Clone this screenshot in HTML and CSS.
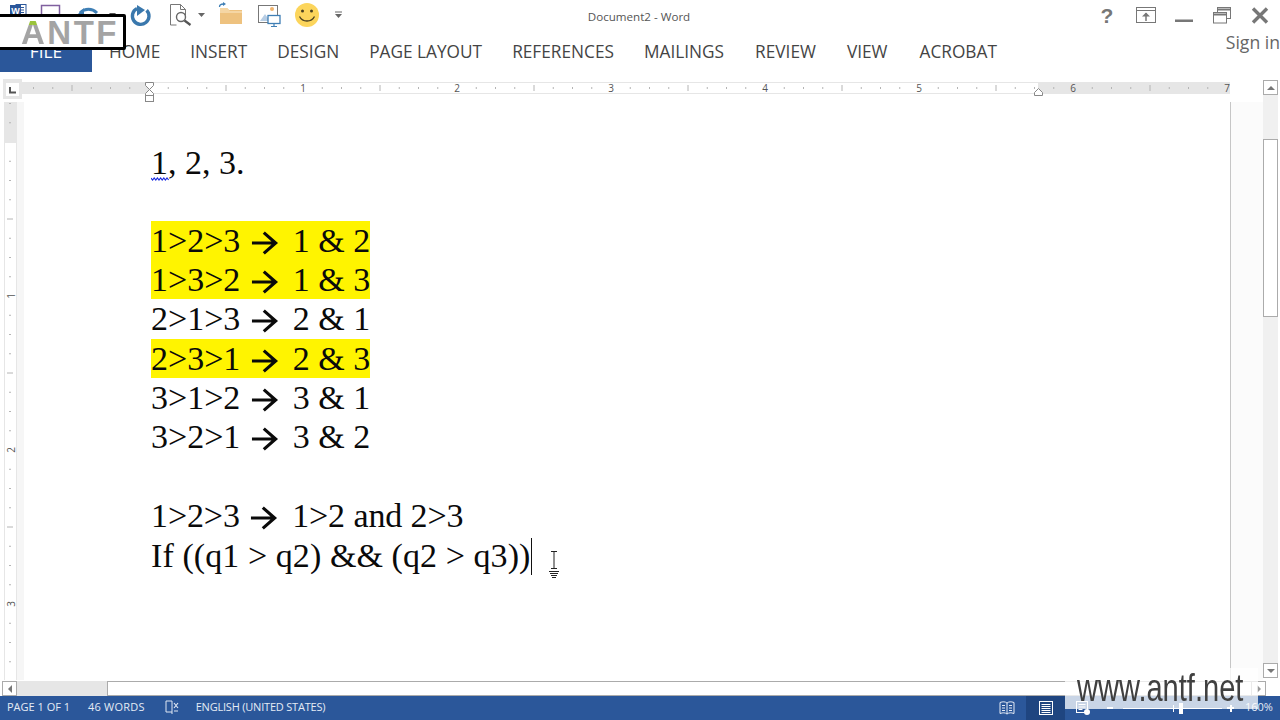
FILE: index.html
```html
<!DOCTYPE html>
<html lang="en">
<head>
    <meta charset="UTF-8">
    <title>Document2 - Word</title>
    <link rel="stylesheet" href="styles.css">
</head>
<body>
    <div id="app">
        <div id="titlebar">
            <div class="qat">
                <svg viewBox="0 0 36 33" width="36" height="33">
                    <rect x="16" y="4.500" width="10" height="13" fill="#fff" stroke="#2b579a"/>
                    <path d="M20 7.500h4M20 10h4M20 12.500h4" stroke="#2b579a"/>
                    <rect x="10" y="5" width="11" height="11" fill="#2b579a"/>
                    <text x="15.500" y="14" class="word-w">W</text>
                </svg>
                <svg viewBox="36 0 34 33" width="34" height="33">
                    <rect x="41.500" y="5.500" width="18" height="14" fill="#fff" stroke="#80609f" stroke-width="1.500"/>
                </svg>
                <svg viewBox="70 0 34 33" width="34" height="33">
                    <path d="M80 13c5-5 12-5 17 0" fill="none" stroke="#3f7fb5" stroke-width="3"/>
                    <path d="M78 14l6-6v8z" fill="#3f7fb5"/>
                </svg>
                <svg viewBox="104 0 22 33" width="22" height="33">
                    <path d="M109 13h7l-3.500 4z" fill="#555"/>
                </svg>
                <svg viewBox="126 0 34 33" width="34" height="33">
                    <path d="M146.600 10.200A8.300 8.300 0 1 1 137 8.600" fill="none" stroke="#3a78ad" stroke-width="3.400"/>
                    <path d="M137 5l8 5-8 6z" fill="#3a78ad"/>
                </svg>
                <svg viewBox="160 0 34 33" width="34" height="33">
                    <path d="M170.500 4.500h10l5 5v6M170.500 4.500v20.500h6" fill="none" stroke="#777"/>
                    <path d="M180.500 4.500v5h5" fill="none" stroke="#777"/>
                    <circle cx="181" cy="17" r="4.500" fill="#fff" stroke="#666" stroke-width="1.400"/>
                    <path d="M184.500 20.500l6 4.500" stroke="#555" stroke-width="2.200"/>
                </svg>
                <svg viewBox="194 0 18 33" width="18" height="33">
                    <path d="M198 13h7l-3.500 4z" fill="#666"/>
                </svg>
                <svg viewBox="212 0 38 33" width="38" height="33">
                    <path d="M220 8h7l2 2h13v14h-22z" fill="#eec27f"/>
                    <path d="M220 8h7l3 3h12v2h-22z" fill="#f5d6a4"/>
                    <path d="M219.500 7c0-2 1.500-3 4-3" fill="none" stroke="#3f7fb5" stroke-width="1.300"/>
                    <path d="M223 2l3 2-3 2z" fill="#3f7fb5"/>
                </svg>
                <svg viewBox="250 0 38 33" width="38" height="33">
                    <rect x="258.500" y="5.500" width="19" height="17" fill="#fff" stroke="#777"/>
                    <circle cx="272" cy="9" r="2" fill="#f0b46e"/>
                    <path d="M260 21l5-7 5 7z" fill="#b7cde4"/>
                    <rect x="268" y="15.500" width="12" height="8" fill="#fff" stroke="#3f7fb5" stroke-width="1.300"/>
                    <path d="M274 24v2M271 26.500h6" stroke="#3f7fb5" stroke-width="1.200"/>
                </svg>
                <svg viewBox="288 0 38 33" width="38" height="33">
                    <circle cx="307" cy="15" r="12" fill="#fcd55c"/>
                    <circle cx="302.500" cy="11" r="1.500" fill="#4a4020"/>
                    <circle cx="311.500" cy="11" r="1.500" fill="#4a4020"/>
                    <path d="M299.500 16.500c3 6 12 6 15 0" fill="none" stroke="#4a4020" stroke-width="1.300"/>
                </svg>
                <svg viewBox="326 0 24 33" width="24" height="33">
                    <path d="M335 12h7" stroke="#666"/>
                    <path d="M335 14h7l-3.500 4z" fill="#666"/>
                </svg>
            </div>
            <div class="doc-title">Document2 - Word</div>
            <div class="win-controls">
                <span class="help">?</span>
                <svg viewBox="1126 0 40 33" width="40" height="33">
                    <rect x="1136.500" y="7.500" width="19" height="15" fill="none" stroke="#777"/>
                    <path d="M1137 10.500h18" stroke="#777"/>
                    <path d="M1146 13v8" stroke="#777" stroke-width="1.500"/>
                    <path d="M1142 16.500l4-4 4 4z" fill="#777"/>
                </svg>
                <svg viewBox="1166 0 36 33" width="36" height="33">
                    <rect x="1175" y="19.500" width="18" height="2.500" fill="#777"/>
                </svg>
                <svg viewBox="1202 0 38 33" width="38" height="33">
                    <rect x="1217.500" y="7.500" width="13" height="11" fill="none" stroke="#777"/>
                    <path d="M1218 9.500h12" stroke="#777" stroke-width="2"/>
                    <rect x="1213.500" y="12.500" width="13" height="10.500" fill="#fff" stroke="#777"/>
                    <path d="M1214 14.500h12" stroke="#777" stroke-width="2"/>
                </svg>
                <svg viewBox="1240 0 40 33" width="40" height="33">
                    <path d="M1253 8.500l14 14M1267 8.500l-14 14" stroke="#777" stroke-width="3.400"/>
                </svg>
            </div>
        </div>

        <div id="tabs">
            <div class="tab tab-file">FILE</div>
            <div class="tab">HOME</div>
            <div class="tab">INSERT</div>
            <div class="tab">DESIGN</div>
            <div class="tab">PAGE LAYOUT</div>
            <div class="tab">REFERENCES</div>
            <div class="tab">MAILINGS</div>
            <div class="tab tab-review">REVIEW</div>
            <div class="tab tab-view">VIEW</div>
            <div class="tab tab-acrobat">ACROBAT</div>
            <div class="sign-in">Sign in</div>
        </div>

        <div id="editor">
            <div id="doc-area">
                <div id="ruler-row">
                    <div class="ruler-corner">
                        <svg viewBox="0 0 13 13" width="13" height="13">
                            <rect width="13" height="13" fill="#fff"/>
                            <path d="M4 4v5.500h6" fill="none" stroke="#555" stroke-width="2"/>
                        </svg>
                    </div>
                    <svg class="h-ruler" viewBox="22 0 1208 30" width="1208" height="30">
                        <defs>
                            <pattern id="h-ticks" patternUnits="userSpaceOnUse" x="149" y="10" width="154" height="12">
                                <path d="M19.250 5v2M38.500 5v2M57.750 5v2M96.250 5v2M115.500 5v2M134.750 5v2" stroke="#b4b4b4"/>
                                <path d="M77 3v6" stroke="#b4b4b4"/>
                            </pattern>
                        </defs>
                        <rect x="22" y="10" width="1208" height="12" fill="#e6e6e6"/>
                        <rect x="149" y="10" width="889" height="12" fill="#fff"/>
                        <path d="M149 10.500h889M149 21.500h889" stroke="#e6e6e6"/>
                        <rect x="22" y="10" width="1208" height="12" fill="url(#h-ticks)"/>
                        <text x="303" y="20" class="ruler-num">1</text>
                        <text x="457" y="20" class="ruler-num">2</text>
                        <text x="611" y="20" class="ruler-num">3</text>
                        <text x="765" y="20" class="ruler-num">4</text>
                        <text x="919" y="20" class="ruler-num">5</text>
                        <text x="1073" y="20" class="ruler-num">6</text>
                        <text x="1227" y="20" class="ruler-num">7</text>
                        <path d="M145.500 10.500h8v3l-4 4 -4-4zM145.500 24.500v-3l4-4 4 4v3z" fill="#fff" stroke="#888"/>
                        <rect x="145.500" y="23.500" width="8" height="6" fill="#fff" stroke="#888"/>
                        <path d="M1034.500 23.500v-3l4-4 4 4v3z" fill="#fff" stroke="#888"/>
                    </svg>
                </div>
                <div id="workspace">
                    <svg class="v-ruler" viewBox="0 102 24 578" width="24" height="578">
                        <defs>
                            <pattern id="v-ticks" patternUnits="userSpaceOnUse" x="4" y="142" width="12" height="154">
                                <path d="M5 19.250h2M5 38.500h2M5 57.750h2M5 96.250h2M5 115.500h2M5 134.750h2" stroke="#b4b4b4"/>
                                <path d="M3 77h6" stroke="#b4b4b4"/>
                            </pattern>
                        </defs>
                        <rect x="17" y="102" width="7" height="578" fill="#f6f6f6"/>
                        <rect x="4" y="102" width="12" height="41" fill="#e6e6e6"/>
                        <path d="M4.500 143v537M16.500 102v578" stroke="#e6e6e6"/>
                        <rect x="4" y="102" width="12" height="578" fill="url(#v-ticks)"/>
                        <text class="ruler-num" transform="translate(15 296) rotate(-90)">1</text>
                        <text class="ruler-num" transform="translate(15 450) rotate(-90)">2</text>
                        <text class="ruler-num" transform="translate(15 604) rotate(-90)">3</text>
                    </svg>
                    <div id="page">
                        <p class="line line-first"><span class="squiggle">1<svg class="squiggle-mark" viewBox="0 0 19 4" width="19" height="4"><path d="M0 1l1.600 2 1.600-2 1.600 2 1.600-2 1.600 2 1.600-2 1.600 2 1.600-2 1.600 2 1.600-2 1.600 2"/></svg></span>, 2, 3.</p>
                        <p class="line">&nbsp;</p>
                        <p class="line"><mark>1&gt;2&gt;3 <svg class="arrow" viewBox="0 0 36 24"><path d="M3 12h24M15 1.500l12 10.500-12 10.500" /></svg> 1 &amp; 2</mark></p>
                        <p class="line"><mark>1&gt;3&gt;2 <svg class="arrow" viewBox="0 0 36 24"><path d="M3 12h24M15 1.500l12 10.500-12 10.500" /></svg> 1 &amp; 3</mark></p>
                        <p class="line">2&gt;1&gt;3 <svg class="arrow" viewBox="0 0 36 24"><path d="M3 12h24M15 1.500l12 10.500-12 10.500" /></svg> 2 &amp; 1</p>
                        <p class="line"><mark>2&gt;3&gt;1 <svg class="arrow" viewBox="0 0 36 24"><path d="M3 12h24M15 1.500l12 10.500-12 10.500" /></svg> 2 &amp; 3</mark></p>
                        <p class="line">3&gt;1&gt;2 <svg class="arrow" viewBox="0 0 36 24"><path d="M3 12h24M15 1.500l12 10.500-12 10.500" /></svg> 3 &amp; 1</p>
                        <p class="line">3&gt;2&gt;1 <svg class="arrow" viewBox="0 0 36 24"><path d="M3 12h24M15 1.500l12 10.500-12 10.500" /></svg> 3 &amp; 2</p>
                        <p class="line">&nbsp;</p>
                        <p class="line line-tight">1&gt;2&gt;3 <svg class="arrow" viewBox="0 0 36 24"><path d="M3 12h24M15 1.500l12 10.500-12 10.500" /></svg> 1&gt;2 and 2&gt;3</p>
                        <p class="line line-code">If ((q1 &gt; q2) &amp;&amp; (q2 &gt; q3))<span class="caret"></span></p>
                    </div>
                    <div class="gutter"></div>
                </div>
            </div>
            <div id="v-scroll">
                <div class="scroll-btn"><span class="tri-up"></span></div>
                <div class="v-track"><div class="v-thumb"></div></div>
                <div class="scroll-btn"><span class="tri-down"></span></div>
            </div>
        </div>

        <div id="h-scroll">
            <div class="scroll-btn"><span class="tri-left"></span></div>
            <div class="h-track"><div class="h-thumb"></div></div>
            <div class="scroll-btn btn-right"><span class="tri-right"></span></div>
        </div>

        <div id="statusbar">
            <span class="st-page">PAGE 1 OF 1</span>
            <span class="st-words">46 WORDS</span>
            <svg class="st-proof" viewBox="0 0 16 16" width="16" height="16">
                <path d="M8 2H2v11h6M8 2v13" fill="none" stroke="#dfe7f3"/>
                <path d="M10 4l4 5M14 4l-4 5M10 12h4" stroke="#dfe7f3" stroke-width="1.200"/>
            </svg>
            <span class="st-lang">ENGLISH (UNITED STATES)</span>
            <div class="st-right">
                <div class="view-btn">
                    <svg viewBox="0 0 16 14" width="16" height="14">
                        <path d="M1 1.500c3-1 5-1 7 .5 2-1.500 4-1.500 7-.5v11c-3-1-5-1-7 .5-2-1.500-4-1.500-7-.5z" fill="none" stroke="#e4ebf5"/>
                        <path d="M8 2v11M3 4.500h3M3 7h3M3 9.500h3M10 4.500h3M10 7h3M10 9.500h3" stroke="#e4ebf5"/>
                    </svg>
                </div>
                <div class="view-btn view-active">
                    <svg viewBox="0 0 16 14" width="16" height="14">
                        <rect x="1.500" y=".5" width="13" height="13" fill="none" stroke="#fff"/>
                        <path d="M3.500 3.500h9M3.500 5.500h9M3.500 7.500h9M3.500 9.500h9M3.500 11.500h9" stroke="#fff"/>
                    </svg>
                </div>
                <div class="view-btn view-web">
                    <svg viewBox="0 0 16 14" width="16" height="14">
                        <rect x="1.500" y=".5" width="11" height="11" fill="none" stroke="#fff"/>
                        <path d="M3.500 3.500h7M3.500 6h7M3.500 8.500h4" stroke="#fff"/>
                        <circle cx="12" cy="11" r="3" fill="#fff"/>
                    </svg>
                </div>
                <div class="zoom-slider">
                    <span class="zoom-minus"></span>
                    <div class="zoom-track"><span class="zoom-mid"></span><span class="zoom-thumb"></span></div>
                    <span class="zoom-plus"></span>
                </div>
                <span class="zoom-pct">160%</span>
            </div>
        </div>

        <div class="logo"><span class="logo-a">A</span>NTF</div>
        <div class="watermark"><span>www.antf.net</span></div>
        <svg class="ibeam" viewBox="0 0 12 28" width="12" height="28">
            <path d="M3 1.500h6M6 1.500v17M3 18.500h6" fill="none" stroke="#222"/>
            <path d="M1 21.500h10M2 23.500h8M3 25.500h6M4 27.500h4" stroke="#222"/>
        </svg>
    </div>
</body>
</html>
```

FILE: styles.css
```css
html, body {
    margin: 0;
    padding: 0;
    background-color: #ffffff;
}
#app {
    position: relative;
    width: 1280px;
    height: 720px;
    overflow: hidden;
    display: flex;
    flex-direction: column;
    font-family: "Open Sans", "Noto Sans", sans-serif;
    color: #444444;
}
svg {
    display: block;
    flex: none;
}

/* title bar */
#titlebar {
    height: 33px;
    position: relative;
    display: flex;
    justify-content: space-between;
}
.qat, .win-controls {
    display: flex;
}
.word-w {
    font-family: "Liberation Sans", sans-serif;
    font-size: 9px;
    font-weight: bold;
    fill: #ffffff;
    text-anchor: middle;
}
.doc-title {
    position: absolute;
    left: 0;
    right: 2px;
    top: 8px;
    text-align: center;
    font-size: 11.6px;
    line-height: 18px;
    color: #555555;
}
.help {
    width: 46px;
    padding-left: 8px;
    box-sizing: border-box;
    text-align: center;
    font-family: "Liberation Sans", sans-serif;
    font-weight: bold;
    font-size: 21px;
    line-height: 31px;
    color: #777777;
}

/* ribbon tabs */
#tabs {
    height: 39px;
    display: flex;
    align-items: stretch;
}
.tab {
    padding: 0 15px;
    font-size: 17.25px;
    line-height: 37px;
    color: #444444;
}
.tab-file {
    width: 92px;
    box-sizing: border-box;
    margin-right: 2px;
    padding: 0;
    text-align: center;
    background-color: #2b579a;
    color: #ffffff;
}
.tab-review, .tab-view {
    margin-left: 1px;
}
.tab-acrobat {
    margin-left: 2px;
}
.sign-in {
    margin-left: auto;
    margin-top: -9px;
    font-size: 17.6px;
    line-height: 37px;
    color: #666666;
}

/* ruler + page */
#editor {
    flex: 1;
    display: flex;
    min-height: 0;
}
#doc-area {
    width: 1263px;
    display: flex;
    flex-direction: column;
}
#ruler-row {
    height: 30px;
    display: flex;
}
.ruler-corner {
    width: 19px;
    height: 20px;
    margin: 7px 0 0 3px;
    background-color: #e6e6e6;
    display: flex;
    align-items: center;
    justify-content: center;
}
.ruler-num {
    font-size: 10px;
    fill: #555555;
    text-anchor: middle;
}
#workspace {
    flex: 1;
    display: flex;
    min-height: 0;
}
#page {
    width: 1207px;
    box-sizing: border-box;
    padding: 40.2px 0 0 127px;
    border-right: 1px solid #c6c6c6;
    font-family: "Liberation Serif", serif;
    font-size: 34px;
    color: #0a0a0a;
}
.line {
    margin: 0;
    height: 39.3px;
    line-height: 39.3px;
    white-space: pre;
}
.line-first {
    line-height: 41.3px;
}
.line-tight {
    letter-spacing: -0.1px;
}
.line-code {
    position: relative;
    top: 1px;
    letter-spacing: 0.08px;
}
mark {
    display: inline-block;
    background-color: #fff400;
    color: #0a0a0a;
}
.arrow {
    display: inline-block;
    width: 35.5px;
    height: 24px;
    vertical-align: -3px;
    fill: none;
    stroke: #0a0a0a;
    stroke-width: 3.2;
}
.squiggle {
    position: relative;
}
.squiggle-mark {
    position: absolute;
    left: 0;
    top: 33px;
    fill: none;
    stroke: #1a2be0;
    stroke-width: 1.2;
}
.caret {
    display: inline-block;
    width: 1px;
    height: 37px;
    margin-left: 1px;
    vertical-align: -8px;
    background-color: #111111;
}
.gutter {
    flex: 1;
    background-color: #fbfbfb;
}

/* scrollbars */
#v-scroll {
    width: 17px;
    padding: 8px 0 2px;
    box-sizing: border-box;
    display: flex;
    flex-direction: column;
}
.scroll-btn {
    flex: none;
    width: 15px;
    height: 15px;
    border: 1px solid #ababab;
    box-sizing: border-box;
    background-color: #ffffff;
    display: flex;
    align-items: center;
    justify-content: center;
}
.tri-up, .tri-down, .tri-left, .tri-right {
    width: 0;
    height: 0;
    border: 4px solid transparent;
}
.tri-up {
    border-bottom-color: #777777;
    border-top-width: 0;
}
.tri-down {
    border-top-color: #777777;
    border-bottom-width: 0;
}
.tri-left {
    border-right-color: #777777;
    border-left-width: 0;
}
.tri-right {
    border-left-color: #999999;
    border-right-width: 0;
}
.v-track {
    flex: 1;
    width: 15px;
    background-color: #f0f0f0;
    padding-top: 44px;
    box-sizing: border-box;
}
.v-thumb {
    height: 178px;
    border: 1px solid #ababab;
    box-sizing: border-box;
    background-color: #ffffff;
}
#h-scroll {
    height: 16px;
    padding: 1px 0 0 2px;
    box-sizing: border-box;
    display: flex;
}
.h-track {
    width: 1234px;
    background-color: #e6e6e6;
    padding-left: 90px;
    box-sizing: border-box;
}
.h-thumb {
    height: 100%;
    border: 1px solid #ababab;
    border-right: none;
    box-sizing: border-box;
    background-color: #ffffff;
}

/* status bar */
#statusbar {
    height: 24px;
    background-color: #2b579a;
    color: #e4ebf5;
    font-size: 11px;
    line-height: 22px;
    display: flex;
}
.st-page {
    margin-left: 7px;
}
.st-words {
    margin-left: 18px;
    letter-spacing: 0.2px;
}
.st-proof {
    margin: 3px 0 0 19px;
}
.st-lang {
    margin-left: 16px;
    letter-spacing: -0.2px;
}
.st-right {
    margin-left: auto;
    display: flex;
}
.view-btn {
    width: 38px;
    display: flex;
    align-items: center;
    justify-content: center;
}
.view-active {
    width: 39px;
    background-color: #1f4580;
}
.view-web {
    width: 36px;
}
.zoom-slider {
    width: 133px;
    padding-left: 6px;
    box-sizing: border-box;
    display: flex;
    align-items: center;
}
.zoom-minus {
    width: 6px;
    height: 2px;
    margin-right: 10px;
    background-color: #ffffff;
}
.zoom-plus {
    position: relative;
    width: 7px;
    height: 2px;
    margin-left: 5px;
    background-color: #ffffff;
}
.zoom-plus::after {
    content: "";
    position: absolute;
    left: 2.5px;
    top: -2.5px;
    width: 2px;
    height: 7px;
    background-color: #ffffff;
}
.zoom-track {
    position: relative;
    width: 100px;
    height: 1px;
    background-color: #ffffff;
}
.zoom-mid {
    position: absolute;
    left: 50px;
    top: -3px;
    width: 1px;
    height: 7px;
    background-color: #ffffff;
}
.zoom-thumb {
    position: absolute;
    left: 56px;
    top: -5px;
    width: 4px;
    height: 11px;
    background-color: #ffffff;
}
.zoom-pct {
    width: 46px;
    padding-left: 11px;
    box-sizing: border-box;
    font-size: 11px;
    color: #e4ebf5;
}

/* video overlays */
.logo {
    position: absolute;
    left: -4px;
    top: 14px;
    width: 102px;
    height: 30px;
    padding-left: 22px;
    border: 3px solid #000000;
    border-radius: 2px;
    background-color: #ffffff;
    font-family: "Liberation Sans", sans-serif;
    font-weight: bold;
    font-size: 33px;
    line-height: 32px;
    letter-spacing: 2.5px;
    color: #a4a4a4;
    white-space: pre;
}
.logo-a {
    background: linear-gradient(#9ac33a 30%, #a4a4a4 30%);
    -webkit-background-clip: text;
    background-clip: text;
    color: transparent;
}
.watermark {
    position: absolute;
    left: 1065px;
    top: 668px;
    width: 193px;
    height: 41px;
    background-color: rgba(255, 255, 255, 0.75);
}
.watermark span {
    position: absolute;
    left: 12px;
    top: 3px;
    font-family: "Liberation Sans", sans-serif;
    font-size: 38px;
    line-height: 34px;
    color: #404040;
    white-space: pre;
    transform: scaleX(0.765);
    transform-origin: left center;
}
.ibeam {
    position: absolute;
    left: 548px;
    top: 550px;
}
```
